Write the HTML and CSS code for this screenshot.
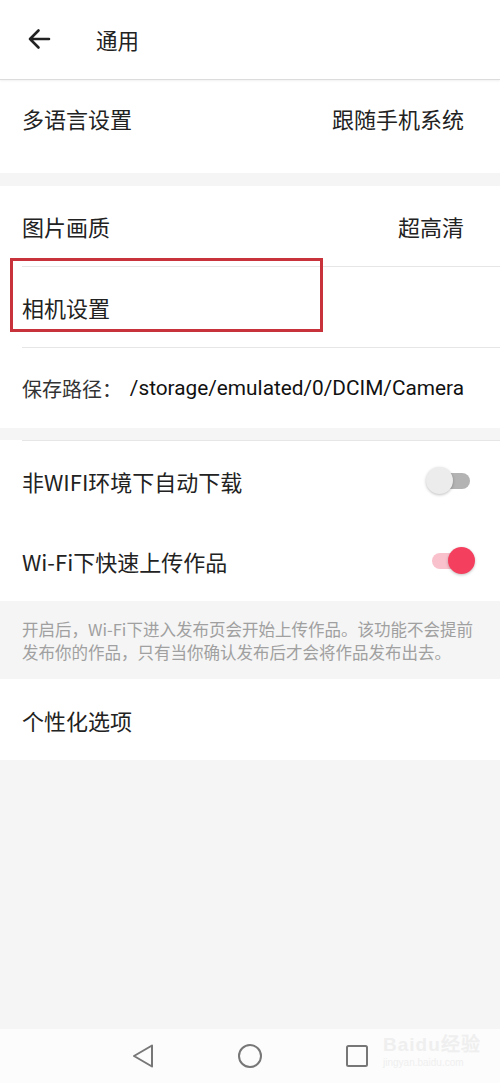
FILE: index.html
```html
<!DOCTYPE html>
<html lang="zh-CN">
<head>
<meta charset="utf-8">
<title>通用</title>
<link rel="stylesheet" href="styles.css">
</head>
<body>
<div class="page">
  <header class="topbar">
    <svg class="back" width="26" height="26" viewBox="0 0 26 26">
      <path d="M23 13H4M12.5 4.5L4 13l8.5 8.5" fill="none" stroke="#222" stroke-width="2.6" stroke-linecap="round" stroke-linejoin="round"/>
    </svg>
    <span class="title">通用</span>
  </header>

  <section class="group first">
    <div class="row"><span class="label">多语言设置</span><span class="value">跟随手机系统</span></div>
  </section>

  <section class="group second">
    <div class="row"><span class="label">图片画质</span><span class="value">超高清</span></div>
    <div class="divider"></div>
    <div class="row camera"><span class="label">相机设置</span><span class="mark"></span></div>
    <div class="divider"></div>
    <div class="row path-row"><span class="label path-label">保存路径：</span><span class="path">/storage/emulated/0/DCIM/Camera</span></div>
  </section>

  <section class="group third">
    <div class="divider"></div>
    <div class="row switch-row"><span class="label">非WIFI环境下自动下载</span><span class="switch off"><span class="track"></span><span class="thumb"></span></span></div>
    <div class="row switch-row"><span class="label">Wi-Fi下快速上传作品</span><span class="switch on"><span class="track"></span><span class="thumb"></span></span></div>
  </section>

  <p class="note">开启后，Wi-Fi下进入发布页会开始上传作品。该功能不会提前<br>发布你的作品，只有当你确认发布后才会将作品发布出去。</p>

  <section class="group fourth">
    <div class="row tall"><span class="label">个性化选项</span></div>
  </section>

  <div class="filler"></div>

  <nav class="navbar">
    <svg width="24" height="26" viewBox="0 0 24 26"><path d="M21 2.5L3 13l18 10.5z" fill="none" stroke="#777" stroke-width="2" stroke-linejoin="round"/></svg>
    <svg width="26" height="26" viewBox="0 0 26 26"><circle cx="13" cy="13" r="11" fill="none" stroke="#777" stroke-width="2"/></svg>
    <svg width="24" height="24" viewBox="0 0 24 24"><rect x="2" y="2" width="20" height="20" rx="1.5" fill="none" stroke="#777" stroke-width="2"/></svg>
    <div class="watermark"><span class="wm-top">Baidu经验</span><span class="wm-bottom">jingyan.baidu.com</span></div>
  </nav>
</div>
</body>
</html>
```

FILE: styles.css
```css
* { box-sizing: border-box; }
html, body { margin: 0; padding: 0; }
body {
  background: #f5f5f5;
  font-family: "Noto Sans CJK SC", "Noto Sans", Roboto, sans-serif;
  color: #222;
}
.page {
  width: 500px;
  height: 1083px;
  display: flex;
  flex-direction: column;
  position: relative;
  overflow: hidden;
}
.topbar {
  height: 80px;
  background: #fff;
  display: flex;
  align-items: center;
  padding-left: 26px;
  border-bottom: 1px solid #dcdcdc;
  box-shadow: 0 1px 2px rgba(0,0,0,0.06);
  position: relative;
  z-index: 1;
  flex-shrink: 0;
}
.back { margin-top: -1px; }
.title {
  margin-left: 44px;
  font-size: 21.5px;
  color: #222;
  line-height: 1;
}
.group {
  background: #fff;
  flex-shrink: 0;
}
.group.first { padding-bottom: 17px; }
.group.second { margin-top: 13px; }
.group.third { margin-top: 12px; }
.row {
  height: 80px;
  display: flex;
  align-items: center;
  justify-content: space-between;
  padding: 0 36px 0 22px;
  font-size: 22px;
  position: relative;
}
.group.first .row { height: 76px; }
.row.tall { height: 81px; }
.label { color: #222; white-space: nowrap; }
.value { color: #222; }
.divider {
  height: 1px;
  background: #e6e6e6;
  margin-left: 22px;
}
.path-row { justify-content: flex-start; }
.path-label { color: #333; font-size: 20px; }
.path {
  margin-left: auto;
  font-family: Roboto, "Noto Sans", sans-serif;
  font-size: 20.8px;
  color: #111;
  white-space: nowrap;
}
.mark {
  position: absolute;
  left: 10px;
  top: -9px;
  width: 313px;
  height: 74px;
  border: 3px solid #c8323b;
}
.switch-row { padding-right: 26px; }
.group.third .row:first-of-type { height: 81px; }
.switch {
  position: relative;
  width: 48px;
  height: 30px;
  display: inline-block;
}
.switch .track {
  position: absolute;
  top: 7px;
  height: 16px;
  border-radius: 8px;
}
.switch .thumb {
  position: absolute;
  top: 1px;
  width: 27px;
  height: 27px;
  border-radius: 50%;
  box-shadow: 0 1px 3px rgba(0,0,0,0.25);
}
.switch.off .track { left: 12px; width: 32px; background: #b3b3b3; }
.switch.off .thumb { left: 0; background: #ececec; }
.switch.on .track { left: 6px; width: 32px; background: #f9c1cb; }
.switch.on .thumb { left: 22px; background: #f4405e; }
.note {
  margin: 0;
  padding: 17px 0 14px 22px;
  font-size: 16.5px;
  line-height: 23px;
  color: #a0a0a0;
  flex-shrink: 0;
  height: 78px;
  white-space: nowrap;
}
.filler { flex: 1; background: #f5f5f5; }
.navbar {
  height: 54px;
  background: #fcfcfc;
  display: flex;
  align-items: center;
  justify-content: center;
  gap: 82px;
  position: relative;
  flex-shrink: 0;
}
.watermark {
  position: absolute;
  left: 383px;
  top: 6px;
  display: flex;
  flex-direction: column;
  font-family: "Liberation Sans", Arial, sans-serif;
  color: #efefef;
  line-height: 1;
}
.wm-top { font-size: 19px; font-weight: bold; letter-spacing: 1px; }
.wm-bottom { font-size: 10px; margin-top: 4px; }
```
